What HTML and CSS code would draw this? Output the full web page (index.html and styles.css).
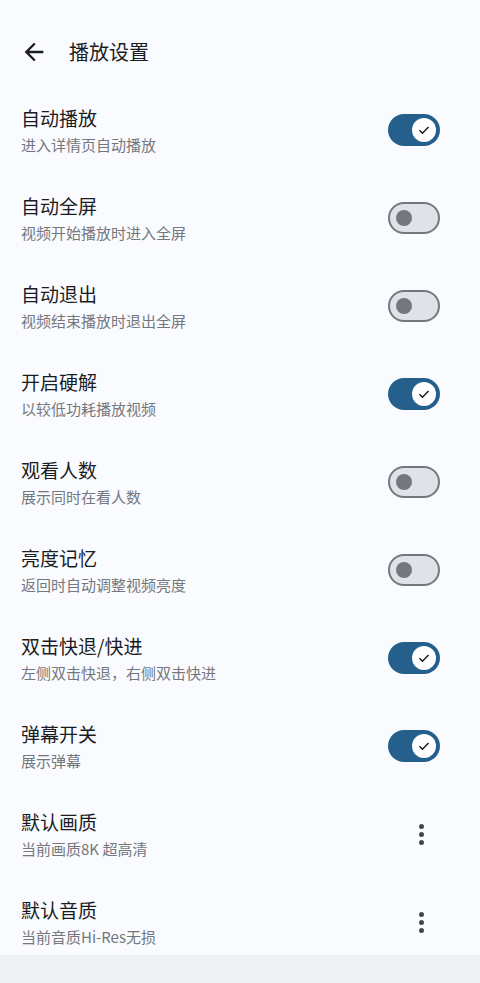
FILE: index.html
```html
<!DOCTYPE html>
<html lang="zh-CN">
<head>
<meta charset="utf-8">
<title>播放设置</title>
<link rel="stylesheet" href="styles.css">
</head>
<body>
<div class="screen">
  <header class="appbar">
    <svg class="back" viewBox="0 0 24 24" width="28" height="28"><path d="M20 11H7.83l5.59-5.59L12 4l-8 8 8 8 1.41-1.41L7.83 13H20v-2z" fill="#1b1c1f"/></svg>
    <h1 class="appbar-title">播放设置</h1>
  </header>
  <main class="list">
    <div class="row">
      <div class="texts"><div class="title">自动播放</div><div class="sub">进入详情页自动播放</div></div>
      <div class="switch on"><span class="thumb"><svg viewBox="0 0 16 16" width="16" height="16"><path d="M3.5 8.3l3 3 6-6.2" fill="none" stroke="#1b1c1f" stroke-width="1.5"/></svg></span></div>
    </div>
    <div class="row">
      <div class="texts"><div class="title">自动全屏</div><div class="sub">视频开始播放时进入全屏</div></div>
      <div class="switch off"><span class="thumb"></span></div>
    </div>
    <div class="row">
      <div class="texts"><div class="title">自动退出</div><div class="sub">视频结束播放时退出全屏</div></div>
      <div class="switch off"><span class="thumb"></span></div>
    </div>
    <div class="row">
      <div class="texts"><div class="title">开启硬解</div><div class="sub">以较低功耗播放视频</div></div>
      <div class="switch on"><span class="thumb"><svg viewBox="0 0 16 16" width="16" height="16"><path d="M3.5 8.3l3 3 6-6.2" fill="none" stroke="#1b1c1f" stroke-width="1.5"/></svg></span></div>
    </div>
    <div class="row">
      <div class="texts"><div class="title">观看人数</div><div class="sub">展示同时在看人数</div></div>
      <div class="switch off"><span class="thumb"></span></div>
    </div>
    <div class="row">
      <div class="texts"><div class="title">亮度记忆</div><div class="sub">返回时自动调整视频亮度</div></div>
      <div class="switch off"><span class="thumb"></span></div>
    </div>
    <div class="row">
      <div class="texts"><div class="title">双击快退/快进</div><div class="sub">左侧双击快退，右侧双击快进</div></div>
      <div class="switch on"><span class="thumb"><svg viewBox="0 0 16 16" width="16" height="16"><path d="M3.5 8.3l3 3 6-6.2" fill="none" stroke="#1b1c1f" stroke-width="1.5"/></svg></span></div>
    </div>
    <div class="row">
      <div class="texts"><div class="title">弹幕开关</div><div class="sub">展示弹幕</div></div>
      <div class="switch on"><span class="thumb"><svg viewBox="0 0 16 16" width="16" height="16"><path d="M3.5 8.3l3 3 6-6.2" fill="none" stroke="#1b1c1f" stroke-width="1.5"/></svg></span></div>
    </div>
    <div class="row">
      <div class="texts"><div class="title">默认画质</div><div class="sub">当前画质8K 超高清</div></div>
      <div class="more"><span></span><span></span><span></span></div>
    </div>
    <div class="row">
      <div class="texts"><div class="title">默认音质</div><div class="sub">当前音质Hi-Res无损</div></div>
      <div class="more"><span></span><span></span><span></span></div>
    </div>
  </main>
  <div class="navbar"></div>
</div>
</body>
</html>
```
FILE: styles.css
```css
* { box-sizing: border-box; }
html, body { margin: 0; padding: 0; }
body {
  background: #fafbfe;
  font-family: "Noto Sans CJK SC", "Noto Sans", sans-serif;
  color: #1b1c1f;
}
.screen {
  width: 480px;
  height: 983px;
  display: flex;
  flex-direction: column;
  overflow: hidden;
  position: relative;
}
.appbar {
  height: 86px;
  flex: none;
  display: flex;
  align-items: center;
  padding: 18px 0 0 20px;
}
.back { flex: none; display: block; }
.appbar-title {
  margin: 0 0 0 21px;
  font-size: 20px;
  font-weight: 400;
  line-height: 28px;
  color: #1b1c1f;
}
.list { flex: 1; overflow: hidden; }
.row {
  height: 88px;
  display: flex;
  align-items: center;
  padding: 0 40px 0 21px;
}
.texts { flex: 1; min-width: 0; }
.title {
  font-size: 19px;
  line-height: 26px;
  color: #1b1c1f;
}
.sub {
  margin-top: 3px;
  font-size: 15px;
  line-height: 22px;
  color: #74777e;
}
.switch {
  flex: none;
  width: 52px;
  height: 32px;
  border-radius: 16px;
  display: flex;
  align-items: center;
}
.switch.on {
  background: #255f8b;
  justify-content: flex-end;
  padding-right: 4px;
}
.switch.on .thumb {
  width: 24px;
  height: 24px;
  border-radius: 50%;
  background: #ffffff;
  display: flex;
  align-items: center;
  justify-content: center;
}
.switch.on .thumb svg { display: block; }
.switch.off {
  background: #e0e2e8;
  border: 2px solid #73777f;
  padding-left: 6px;
}
.switch.off .thumb {
  width: 16px;
  height: 16px;
  border-radius: 50%;
  background: #73777f;
}
.more {
  flex: none;
  width: 52px;
  display: flex;
  flex-direction: column;
  align-items: flex-end;
  gap: 3px;
  padding-right: 16px;
}
.more span {
  width: 5px;
  height: 5px;
  border-radius: 50%;
  background: #44474e;
}
.navbar {
  position: absolute;
  left: 0;
  right: 0;
  bottom: 0;
  height: 28px;
  background: #eef0f3;
}
```
